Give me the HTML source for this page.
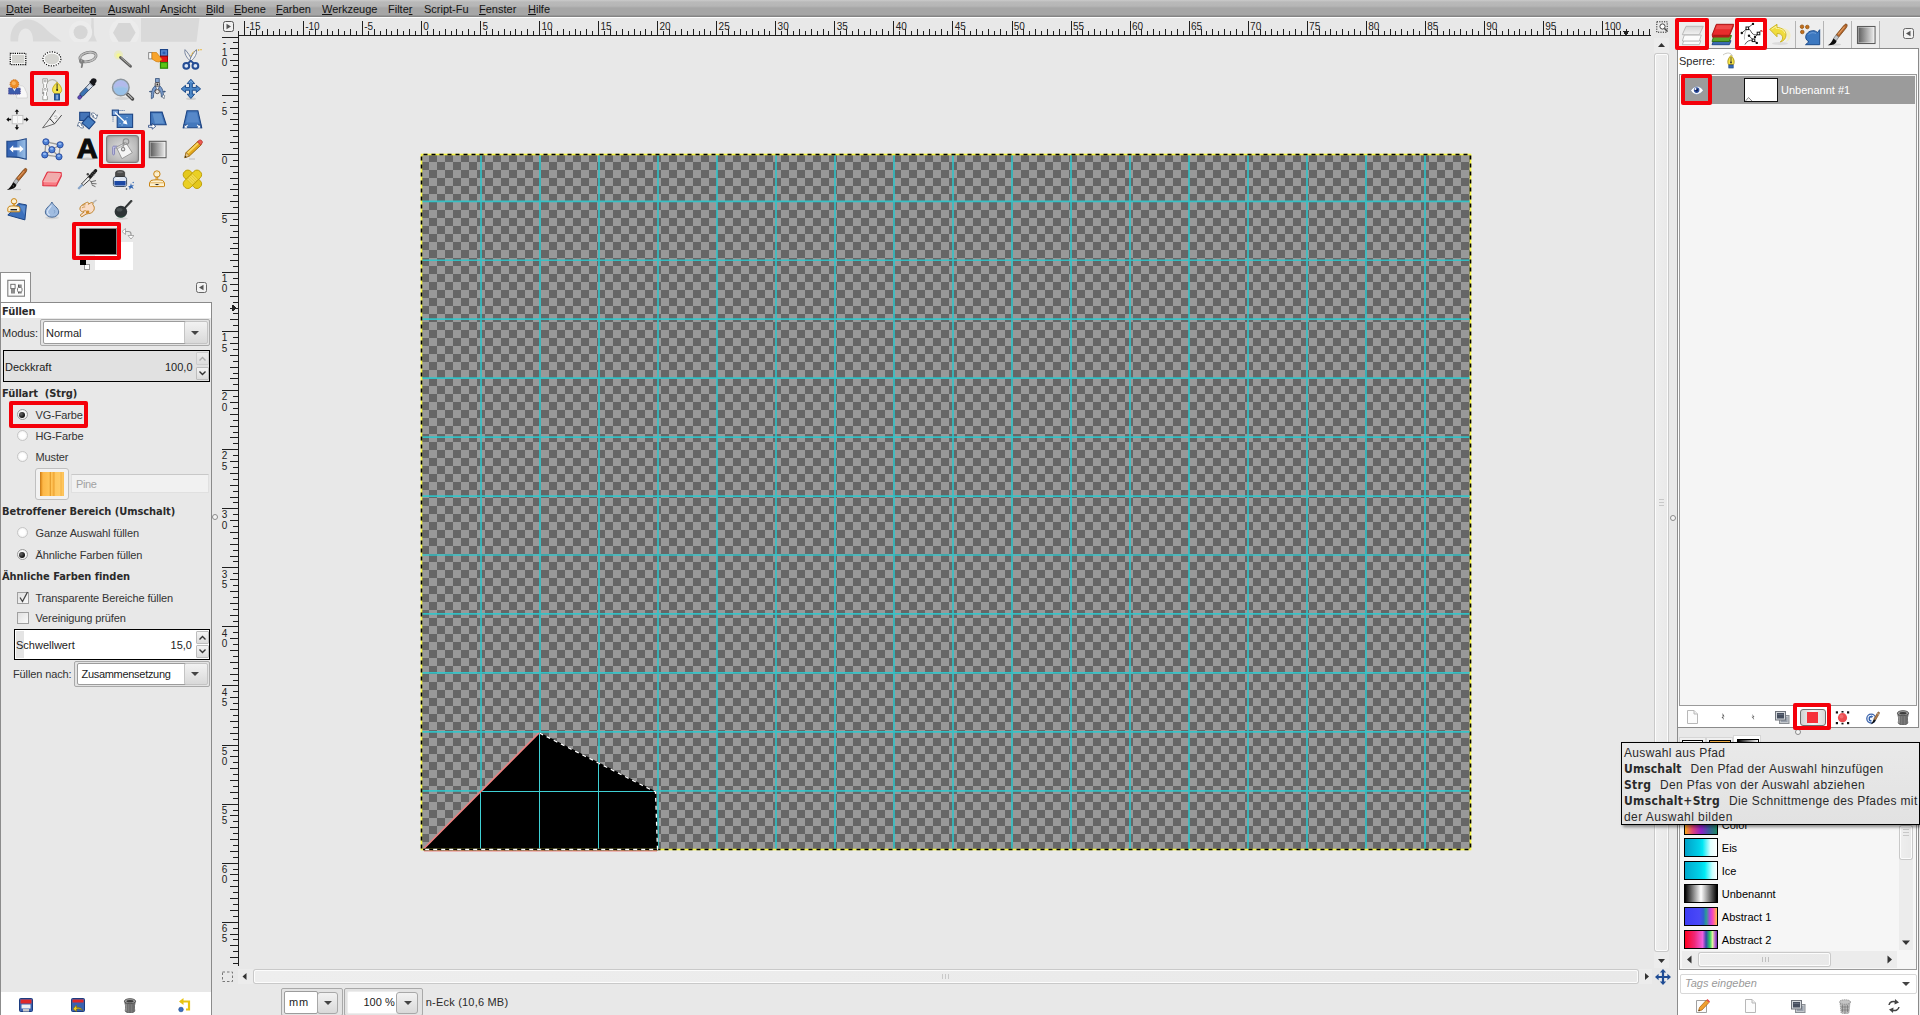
<!DOCTYPE html>
<html lang="de"><head><meta charset="utf-8"><title>GIMP</title>
<style>
html,body{margin:0;padding:0}
body{width:1920px;height:1015px;position:relative;overflow:hidden;background:#e8e8e8;font-family:"Liberation Sans",sans-serif;font-size:11px;color:#1c1c1c;line-height:13px}
div,span,svg{position:absolute;box-sizing:border-box}
span{white-space:nowrap}
.b{font-weight:bold;color:#2a2a2a;font-family:"DejaVu Sans Condensed","Liberation Sans",sans-serif;letter-spacing:-.05px}
b.b{letter-spacing:inherit}
.l{color:#333;letter-spacing:-.12px}
.red{border:4px solid #f4000a;border-radius:2px}
#menu{left:0;top:0;width:1920px;height:17px;background:linear-gradient(#cbcbcb 0,#b9b9b9 2px,#b6b6b6 6px,#a6a6a6 8px,#a6a6a6 15px,#858585 16px,#858585 17px)}
#menu span{top:3px;font-size:11px;color:#141414}
#mline{left:0;top:17px;width:1920px;height:1px;background:#fff}
.rl{font-size:10px;color:#222;line-height:10px}
.vr{font-size:10px;color:#222;line-height:10.2px;width:8px;text-align:center;left:220.5px;white-space:normal;word-break:break-all}
#canvas{left:421px;top:154px;width:1050px;height:696px;background-color:#666;background-image:conic-gradient(#999 25%,#666 0 50%,#999 0 75%,#666 0);background-size:16px 16px;background-position:8px 0;overflow:hidden}
.combo{border:1px solid #a9a9a9;background:#e3e3e3;border-radius:2px}
.combo i{position:absolute;left:2px;top:1px;bottom:1px;background:#fff;border:1px solid #9c9c9c;border-radius:2px}
.combo b{position:absolute;right:1px;top:1px;bottom:1px;width:22px;border:1px solid #c4c4c4;border-radius:2px;background:linear-gradient(#f2f2f2,#d9d9d9)}
.arr{width:0;height:0;border-left:4px solid transparent;border-right:4px solid transparent;border-top:4px solid #444}
.radio{width:11px;height:11px;border-radius:6px;border:1px solid #c6c6c6;background:radial-gradient(#fff 40%,#e6e6e6)}
.radio.on{border-color:#9a9a9a}
.radio.on:after{content:"";position:absolute;left:1.5px;top:1.5px;width:6px;height:6px;border-radius:3px;background:radial-gradient(circle at 35% 35%,#666,#111 70%)}
.chk{width:12px;height:12px;border:1px solid #a0a0a0;background:linear-gradient(135deg,#e0e0e0,#fafafa)}
.slider{border:1.5px solid #000;background:#fff}
.spin{width:13px;border:1px solid #bdbdbd;background:linear-gradient(#f4f4f4,#dcdcdc);border-radius:1px}
.sbt{background:linear-gradient(90deg,#eeeeee,#e9e9e9);border:1px solid #fcfcfc;box-shadow:0 0 0 1px #c9c9c9;border-radius:2px}
.ring{width:6px;height:6px;border-radius:3px;border:1.3px solid #8a8a8a;background:#f4f4f4}
</style></head>
<body>
<div id="menu"><span style="left:6px"><u>D</u>atei</span><span style="left:43px">Bearbeite<u>n</u></span><span style="left:108px"><u>A</u>uswahl</span><span style="left:160px">An<u>s</u>icht</span><span style="left:206px"><u>B</u>ild</span><span style="left:234px"><u>E</u>bene</span><span style="left:276px"><u>F</u>arben</span><span style="left:322px"><u>W</u>erkzeuge</span><span style="left:388px">Filte<u>r</u></span><span style="left:424px">Script-Fu</span><span style="left:479px"><u>F</u>enster</span><span style="left:528px"><u>H</u>ilfe</span></div><div id="mline"></div>
<div style="left:211px;top:992px;width:1px;height:23px;background:#8c8c8c"></div><div style="left:0;top:303px;width:1px;height:712px;background:#8c8c8c"></div><svg style="left:0;top:0" width="1700" height="1015" shape-rendering="crispEdges"><path d="M238.5 31V35M244.5 21V35M250.5 31V35M256.5 29V35M262.5 31V35M267.5 29V35M273.5 31V35M279.5 29V35M285.5 31V35M291.5 29V35M297.5 31V35M303.5 21V35M309.5 31V35M315.5 29V35M321.5 31V35M327.5 29V35M332.5 31V35M338.5 29V35M344.5 31V35M350.5 29V35M356.5 31V35M362.5 21V35M368.5 31V35M374.5 29V35M380.5 31V35M386.5 29V35M391.5 31V35M397.5 29V35M403.5 31V35M409.5 29V35M415.5 31V35M421.5 21V35M427.5 31V35M433.5 29V35M439.5 31V35M445.5 29V35M451.5 31V35M456.5 29V35M462.5 31V35M468.5 29V35M474.5 31V35M480.5 21V35M486.5 31V35M492.5 29V35M498.5 31V35M504.5 29V35M510.5 31V35M515.5 29V35M521.5 31V35M527.5 29V35M533.5 31V35M539.5 21V35M545.5 31V35M551.5 29V35M557.5 31V35M563.5 29V35M569.5 31V35M575.5 29V35M580.5 31V35M586.5 29V35M592.5 31V35M598.5 21V35M604.5 31V35M610.5 29V35M616.5 31V35M622.5 29V35M628.5 31V35M634.5 29V35M640.5 31V35M645.5 29V35M651.5 31V35M657.5 21V35M663.5 31V35M669.5 29V35M675.5 31V35M681.5 29V35M687.5 31V35M693.5 29V35M699.5 31V35M704.5 29V35M710.5 31V35M716.5 21V35M722.5 31V35M728.5 29V35M734.5 31V35M740.5 29V35M746.5 31V35M752.5 29V35M758.5 31V35M764.5 29V35M769.5 31V35M775.5 21V35M781.5 31V35M787.5 29V35M793.5 31V35M799.5 29V35M805.5 31V35M811.5 29V35M817.5 31V35M823.5 29V35M828.5 31V35M834.5 21V35M840.5 31V35M846.5 29V35M852.5 31V35M858.5 29V35M864.5 31V35M870.5 29V35M876.5 31V35M882.5 29V35M888.5 31V35M893.5 21V35M899.5 31V35M905.5 29V35M911.5 31V35M917.5 29V35M923.5 31V35M929.5 29V35M935.5 31V35M941.5 29V35M947.5 31V35M952.5 21V35M958.5 31V35M964.5 29V35M970.5 31V35M976.5 29V35M982.5 31V35M988.5 29V35M994.5 31V35M1000.5 29V35M1006.5 31V35M1012.5 21V35M1017.5 31V35M1023.5 29V35M1029.5 31V35M1035.5 29V35M1041.5 31V35M1047.5 29V35M1053.5 31V35M1059.5 29V35M1065.5 31V35M1071.5 21V35M1077.5 31V35M1082.5 29V35M1088.5 31V35M1094.5 29V35M1100.5 31V35M1106.5 29V35M1112.5 31V35M1118.5 29V35M1124.5 31V35M1130.5 21V35M1136.5 31V35M1141.5 29V35M1147.5 31V35M1153.5 29V35M1159.5 31V35M1165.5 29V35M1171.5 31V35M1177.5 29V35M1183.5 31V35M1189.5 21V35M1195.5 31V35M1201.5 29V35M1206.5 31V35M1212.5 29V35M1218.5 31V35M1224.5 29V35M1230.5 31V35M1236.5 29V35M1242.5 31V35M1248.5 21V35M1254.5 31V35M1260.5 29V35M1265.5 31V35M1271.5 29V35M1277.5 31V35M1283.5 29V35M1289.5 31V35M1295.5 29V35M1301.5 31V35M1307.5 21V35M1313.5 31V35M1319.5 29V35M1325.5 31V35M1330.5 29V35M1336.5 31V35M1342.5 29V35M1348.5 31V35M1354.5 29V35M1360.5 31V35M1366.5 21V35M1372.5 31V35M1378.5 29V35M1384.5 31V35M1390.5 29V35M1395.5 31V35M1401.5 29V35M1407.5 31V35M1413.5 29V35M1419.5 31V35M1425.5 21V35M1431.5 31V35M1437.5 29V35M1443.5 31V35M1449.5 29V35M1454.5 31V35M1460.5 29V35M1466.5 31V35M1472.5 29V35M1478.5 31V35M1484.5 21V35M1490.5 31V35M1496.5 29V35M1502.5 31V35M1508.5 29V35M1514.5 31V35M1519.5 29V35M1525.5 31V35M1531.5 29V35M1537.5 31V35M1543.5 21V35M1549.5 31V35M1555.5 29V35M1561.5 31V35M1567.5 29V35M1573.5 31V35M1578.5 29V35M1584.5 31V35M1590.5 29V35M1596.5 31V35M1602.5 21V35M1608.5 31V35M1614.5 29V35M1620.5 31V35M1626.5 29V35M1632.5 31V35M1638.5 29V35M1643.5 31V35M1649.5 29V35" stroke="#1e1e1e" stroke-width="1" fill="none"/><path d="M238 35.5H1651" stroke="#1e1e1e" stroke-width="1"/><path d="M222 37.5H238M233 42.5H238M230 48.5H238M233 54.5H238M230 60.5H238M233 65.5H238M230 71.5H238M233 77.5H238M230 83.5H238M233 89.5H238M222 95.5H238M233 101.5H238M230 107.5H238M233 113.5H238M230 119.5H238M233 124.5H238M230 130.5H238M233 136.5H238M230 142.5H238M233 148.5H238M222 154.5H238M233 160.5H238M230 166.5H238M233 172.5H238M230 178.5H238M233 184.5H238M230 189.5H238M233 195.5H238M230 201.5H238M233 207.5H238M222 213.5H238M233 219.5H238M230 225.5H238M233 231.5H238M230 237.5H238M233 243.5H238M230 248.5H238M233 254.5H238M230 260.5H238M233 266.5H238M222 272.5H238M233 278.5H238M230 284.5H238M233 290.5H238M230 296.5H238M233 302.5H238M230 308.5H238M233 313.5H238M230 319.5H238M233 325.5H238M222 331.5H238M233 337.5H238M230 343.5H238M233 349.5H238M230 355.5H238M233 361.5H238M230 367.5H238M233 373.5H238M230 378.5H238M233 384.5H238M222 390.5H238M233 396.5H238M230 402.5H238M233 408.5H238M230 414.5H238M233 420.5H238M230 426.5H238M233 432.5H238M230 437.5H238M233 443.5H238M222 449.5H238M233 455.5H238M230 461.5H238M233 467.5H238M230 473.5H238M233 479.5H238M230 485.5H238M233 491.5H238M230 497.5H238M233 502.5H238M222 508.5H238M233 514.5H238M230 520.5H238M233 526.5H238M230 532.5H238M233 538.5H238M230 544.5H238M233 550.5H238M230 556.5H238M233 561.5H238M222 567.5H238M233 573.5H238M230 579.5H238M233 585.5H238M230 591.5H238M233 597.5H238M230 603.5H238M233 609.5H238M230 615.5H238M233 621.5H238M222 626.5H238M233 632.5H238M230 638.5H238M233 644.5H238M230 650.5H238M233 656.5H238M230 662.5H238M233 668.5H238M230 674.5H238M233 680.5H238M222 685.5H238M233 691.5H238M230 697.5H238M233 703.5H238M230 709.5H238M233 715.5H238M230 721.5H238M233 727.5H238M230 733.5H238M233 739.5H238M222 745.5H238M233 750.5H238M230 756.5H238M233 762.5H238M230 768.5H238M233 774.5H238M230 780.5H238M233 786.5H238M230 792.5H238M233 798.5H238M222 804.5H238M233 810.5H238M230 815.5H238M233 821.5H238M230 827.5H238M233 833.5H238M230 839.5H238M233 845.5H238M230 851.5H238M233 857.5H238M222 863.5H238M233 869.5H238M230 874.5H238M233 880.5H238M230 886.5H238M233 892.5H238M230 898.5H238M233 904.5H238M230 910.5H238M233 916.5H238M222 922.5H238M233 928.5H238M230 934.5H238M233 939.5H238M230 945.5H238M233 951.5H238M230 957.5H238M233 963.5H238" stroke="#1e1e1e" stroke-width="1" fill="none"/><path d="M238.5 36V966" stroke="#1e1e1e" stroke-width="1"/><path d="M1622 30.500h8l-4 5z" fill="#222"/><path d="M231.500 304v8l5.500-4z" fill="#222"/></svg>
<span class="rl" style="left:246.1px;top:22px">-15</span><span class="rl" style="left:305.2px;top:22px">-10</span><span class="rl" style="left:364.2px;top:22px">-5</span><span class="rl" style="left:423.3px;top:22px">0</span><span class="rl" style="left:482.4px;top:22px">5</span><span class="rl" style="left:541.4px;top:22px">10</span><span class="rl" style="left:600.5px;top:22px">15</span><span class="rl" style="left:659.5px;top:22px">20</span><span class="rl" style="left:718.6px;top:22px">25</span><span class="rl" style="left:777.6px;top:22px">30</span><span class="rl" style="left:836.7px;top:22px">35</span><span class="rl" style="left:895.7px;top:22px">40</span><span class="rl" style="left:954.8px;top:22px">45</span><span class="rl" style="left:1013.8px;top:22px">50</span><span class="rl" style="left:1072.9px;top:22px">55</span><span class="rl" style="left:1132.0px;top:22px">60</span><span class="rl" style="left:1191.0px;top:22px">65</span><span class="rl" style="left:1250.1px;top:22px">70</span><span class="rl" style="left:1309.1px;top:22px">75</span><span class="rl" style="left:1368.2px;top:22px">80</span><span class="rl" style="left:1427.2px;top:22px">85</span><span class="rl" style="left:1486.3px;top:22px">90</span><span class="rl" style="left:1545.3px;top:22px">95</span><span class="rl" style="left:1604.4px;top:22px">100</span>
<span class="vr" style="top:38.0px">-10</span><span class="vr" style="top:97.0px">-5</span><span class="vr" style="top:156.1px">0</span><span class="vr" style="top:215.2px">5</span><span class="vr" style="top:274.2px">10</span><span class="vr" style="top:333.3px">15</span><span class="vr" style="top:392.3px">20</span><span class="vr" style="top:451.4px">25</span><span class="vr" style="top:510.4px">30</span><span class="vr" style="top:569.5px">35</span><span class="vr" style="top:628.5px">40</span><span class="vr" style="top:687.6px">45</span><span class="vr" style="top:746.6px">50</span><span class="vr" style="top:805.7px">55</span><span class="vr" style="top:864.8px">60</span><span class="vr" style="top:923.8px">65</span>
<svg style="left:223px;top:21px" width="11" height="11" viewBox="0 0 11 11"><rect x=".5" y=".5" width="10" height="10" rx="2" fill="#f0f0f0" stroke="#555"/><path d="M3.5 2.8v5.4l4.5-2.7z" fill="#555"/></svg><svg style="left:1656px;top:21px" width="12" height="12" viewBox="0 0 12 12"><rect x=".8" y=".8" width="10.400" height="10.400" fill="none" stroke="#222" stroke-dasharray="1.200 1.200"/><circle cx="6.500" cy="5.500" r="2.600" fill="#fff" stroke="#444" stroke-width="1"/><path d="M8.500 7.500l2.500 2.500" stroke="#444" stroke-width="1.600"/></svg><svg style="left:221px;top:970px" width="13" height="13" viewBox="0 0 13 13"><rect x="1.500" y="2" width="10" height="9.500"fill="none" stroke="#777" stroke-dasharray="2.500 2"/></svg><svg style="left:1655px;top:969px" width="16" height="16" viewBox="0 0 16 16"><path d="M8 0l3.200 3.600h-2.100v3.300h3.300v-2.100l3.600 3.200-3.600 3.200v-2.100h-3.300v3.300h2.100l-3.200 3.600-3.200-3.600h2.100v-3.300h-3.300v2.100l-3.600-3.200 3.600-3.200v2.100h3.300v-3.300h-2.100z" fill="#1f4c94"/></svg>
<div id="canvas"></div><svg style="left:0;top:0" width="1500" height="860"><path d="M481.0 154V850M540.0 154V850M599.0 154V850M658.0 154V850M717.0 154V850M776.0 154V850M835.0 154V850M894.0 154V850M953.0 154V850M1012.0 154V850M1071.0 154V850M1130.0 154V850M1189.0 154V850M1248.0 154V850M1307.0 154V850M1366.0 154V850M1425.0 154V850M421 201.30H1471M421 260.25H1471M421 319.20H1471M421 378.15H1471M421 437.10H1471M421 496.05H1471M421 555.00H1471M421 613.95H1471M421 672.90H1471M421 731.85H1471M421 790.80H1471" stroke="#2fc6ca" stroke-width="1.7" fill="none" opacity=".92"/></svg>
<svg style="left:400px;top:140px" width="1100" height="730" viewBox="400 140 1100 730"><path d="M423 849.5L539.5 733L655.5 792L657.5 849.5Z" fill="#000"/><path d="M480.5 792V849M539.5 734V849M598.5 764V849M482 791.5H655" stroke="#3fd0d4" stroke-width="1" fill="none"/><path d="M422.5 850L539 733M424 850.8H657" stroke="#f08080" stroke-width="1.6" fill="none"/><rect x="421.5" y="154.5" width="1049" height="695" fill="none" stroke="#f6f640" stroke-width="1.6"/><rect x="421.5" y="154.5" width="1049" height="695" fill="none" stroke="#000" stroke-width="1.6" stroke-dasharray="4 4" stroke-dashoffset="-2"/><path d="M539.5 733L655.5 792L657.5 849.5L423 849.5" stroke="#000" stroke-width="1.3" fill="none"/><path d="M539.5 733L655.5 792L657.5 849.5L423 849.5" stroke="#fff" stroke-width="1.3" stroke-dasharray="4 4" fill="none"/></svg>
<div style="left:238px;top:969px;width:1414px;height:15px;background:#ececec"></div><div class="sbt" style="left:254px;top:970px;width:1384px;height:13px"></div><svg style="left:238px;top:969px" width="1414" height="15"><path d="M4.500 7.5l4-3.500v7z" fill="#333"/><path d="M1411 7.5l-4-3.5v7z" fill="#333"/><path d="M704.5 5v5M707.5 5v5M710.5 5v5" stroke="#c8c8c8"/></svg><div style="left:1654px;top:38px;width:15px;height:930px;background:#ececec"></div><div class="sbt" style="left:1655px;top:54px;width:13px;height:897px"></div><svg style="left:1654px;top:38px" width="15" height="930"><path d="M7.5 5l3.5 4h-7z" fill="#333"/><path d="M7.5 925l3.5-4h-7z" fill="#333"/><path d="M5 461.5h5M5 464.5h5M5 467.5h5" stroke="#c8c8c8"/></svg>
<div class="combo" style="left:281px;top:988px;width:62px;height:28px"><i style="width:32px;left:2px;top:2px"></i><b style="width:19px;right:4px;top:3px;border-color:#a8a8a8;border-radius:3px"></b></div><span style="left:289px;top:996px;letter-spacing:.8px">mm</span><div class="arr" style="left:324px;top:1001px"></div><div class="combo" style="left:344px;top:988px;width:79px;height:28px"><i style="width:51px;left:2px;top:2px;border-color:#ededed"></i><b style="width:20px;right:4px;top:3px;border-color:#a8a8a8;border-radius:3px"></b></div><span style="left:363.5px;top:996px">100 %</span><div class="arr" style="left:404px;top:1001px"></div><span style="left:425.8px;top:996px;color:#2a2a2a;letter-spacing:.2px">n-Eck (10,6 MB)</span>
<div class="ring" style="left:1670.4px;top:514.6px"></div><div class="ring" style="left:211.6px;top:514px"></div><div class="ring" style="left:1795.3px;top:728.7px"></div>
<svg style="left:8px;top:18px" width="200" height="24" viewBox="0 0 200 24"><g fill="#d9d9d9"><path d="M2.600 23.500c-1-13 6-22 17-22 9 0 15 6 22 13l12 9h-28.500c0-8-3-13-7.500-13s-7.500 5-7.500 13z"/><path d="M83.400 0h2.200l.5 17 2.800 6.500h-8.800l2.800-6.500z"/><path d="M133 0h58.500l-3 23.800h-55.500z"/></g><circle cx="72.600" cy="14.200" r="11.500" fill="#ececec"/><circle cx="72.600" cy="14.200" r="7" fill="#d6d6d6"/><circle cx="116.300" cy="14.800" r="15" fill="#ececec"/><path d="M105 14.800l5.500-9.800h11.600l5.500 9.800-5.500 9h-11.600z" fill="#d6d6d6"/></svg>
<div style="left:106px;top:135px;width:33px;height:28px;border:1px solid #7e7e7e;border-radius:3px;background:radial-gradient(ellipse at center,#cfcfcf 30%,#a8a8a8 100%);box-shadow:inset 0 0 2px #777"></div><svg style="left:5.5px;top:46.5px" width="24" height="24" viewBox="0 0 24 24"><rect x="3.800" y="5.800" width="16.400" height="12.300" fill="#fff"/><rect x="6" y="7.800" width="12.400" height="8.500" fill="#d2d2ce"/><rect x="4.300" y="6.300" width="15.500" height="11.300" fill="none" stroke="#000" stroke-width="1.300" stroke-dasharray="1.200 1.030"/></svg><svg style="left:39.5px;top:46.5px" width="24" height="24" viewBox="0 0 24 24"><ellipse cx="11.900" cy="11.900" rx="9.600" ry="7.600" fill="#fff"/><ellipse cx="11.900" cy="11.900" rx="7.300" ry="5.500" fill="#d4d4d0"/><ellipse cx="11.900" cy="11.900" rx="9" ry="7" fill="none" stroke="#111" stroke-width="1.200" stroke-dasharray="1.200 1.300"/></svg><svg style="left:74.5px;top:46.5px" width="24" height="24" viewBox="0 0 24 24"><g transform="rotate(-14 13 10)" fill="none"><ellipse cx="13" cy="10" rx="8.300" ry="4.600" stroke="#808080" stroke-width="2.800"/><ellipse cx="13" cy="10" rx="8.300" ry="4.600" stroke="#e2e2e2" stroke-width="1.100"/><ellipse cx="13" cy="10" rx="8.300" ry="4.600" stroke="#8a8a8a" stroke-width=".4"/></g><path d="M5.500 12.500c-1.300 1.500-.3 3.300 1.500 3.300s2-1.800.5-2.300M7 15.500c.3 1.500.3 3 -.3 4.500" fill="none" stroke="#808080" stroke-width="1.900" stroke-linecap="round"/></svg><svg style="left:110.5px;top:46.5px" width="24" height="24" viewBox="0 0 24 24"><circle cx="7.500" cy="8" r="4.500" fill="#eef07a" opacity=".35"/><circle cx="7.500" cy="8.500" r="2.200" fill="#f6f88a" opacity=".9"/><path d="M9.500 10.500L19.500 19.300" stroke="#5a5a5a" stroke-width="2.800" stroke-linecap="round"/><path d="M10 10.500L19 18.400" stroke="#b4b4ac" stroke-width=".9" stroke-linecap="round"/></svg><svg style="left:145.5px;top:46.5px" width="24" height="24" viewBox="0 0 24 24"><rect x="14.500" y="2.600" width="7" height="6.600" fill="#5c8cd4" stroke="#1c4488" stroke-width="1.200"/><rect x="16.500" y="4.500" width="3" height="2.800" fill="#2c5cb0"/><rect x="14.500" y="9.200" width="7" height="6.300" fill="#e41414" stroke="#a00000" stroke-width="1"/><rect x="14.500" y="15.500" width="7" height="5.700" fill="#5cc414" stroke="#2c8404" stroke-width="1.200"/><rect x="2.700" y="5.600" width="3.300" height="6.300" fill="#fff" stroke="#7c7c7c" stroke-width=".9"/><path d="M6 5.500h4.500l5.500 7-3 2.500-3-.5-4-2.600z" fill="#f8a42c" stroke="#d07c0c" stroke-width=".7"/></svg><svg style="left:179.5px;top:46.5px" width="24" height="24" viewBox="0 0 24 24"><path d="M10.900 9c1.500-4 5-6.500 11.500-6.200" stroke="#e8ac18" stroke-width="1.100" stroke-dasharray="1.500 .9" fill="none"/><path d="M5 2.600c-.9 4 1.500 8 5.200 11.400l1.200-1.300c-.9-3-3.600-7.300-6.400-10.100z" fill="#ececec" stroke="#5c6c8c" stroke-width=".8"/><path d="M16.400 2.600c.9 4-1.500 8-5.200 11.400l-1.200-1.300c.9-3 3.600-7.300 6.400-10.100z" fill="#f4f4f4" stroke="#5c6c8c" stroke-width=".8"/><ellipse cx="6.300" cy="18.900" rx="2.900" ry="2.800" fill="#dce6f6" stroke="#244c94" stroke-width="2"/><ellipse cx="15.400" cy="18.900" rx="2.900" ry="2.800" fill="#dce6f6" stroke="#244c94" stroke-width="2"/><path d="M8 16.300l2.800-2.400 2.800 2.400" stroke="#244c94" stroke-width="1.900" fill="none"/></svg>
<svg style="left:5.5px;top:76.5px" width="24" height="24" viewBox="0 0 24 24"><path d="M11 12c.5-2.500 3-3.800 5.500-3 1.500.5 2.500 2 3 4.500 1.500 1.500 2 4 1.800 7.500h-10.800z" fill="#f8f8f8" stroke="#cfcfcf" stroke-width=".8"/><rect x="2.700" y="11.100" width="11.500" height="6" fill="#3c5cac" stroke="#443c8c" stroke-width=".9" stroke-dasharray="1.100 .7"/><path d="M6.500 11.100l1.900 3.200 1.900-3.200z" fill="#e4ecfc"/><circle cx="8.400" cy="7" r="4.300" fill="#ee8c24" stroke="#c4640c" stroke-width="1" stroke-dasharray="1.200 .8"/><circle cx="7.800" cy="6.300" r="2" fill="#fcc070" opacity=".75"/></svg><svg style="left:39.5px;top:76.5px" width="24" height="24" viewBox="0 0 24 24"><path d="M7 5.500c3-3.800 8-3.800 10.500.3" fill="none" stroke="#b8b8b0" stroke-width="1.200"/><path d="M2.800 1.800h4.600v4.400l-.9 1v3.200l.9 1v3l-.9 1v3l.9 1v3.400h-4.600v-3.400l.9-1v-3l-.9-1v-3l.9-1v-3.200l-.9-1z" fill="#fff" stroke="#8c8c88" stroke-width=".8"/><circle cx="5.100" cy="4" r="1" fill="#fff" stroke="#777" stroke-width=".6"/><circle cx="5.100" cy="12.300" r="1" fill="#fff" stroke="#777" stroke-width=".6"/><path d="M2 17l2-2M2 15l2 2" stroke="#888" stroke-width=".7"/><path d="M17.100 5.300c-3.800 3.500-5.400 6.800-4.200 9.200l1.800 2.300h4.800l1.800-2.300c1.200-2.400-.4-5.700-4.200-9.200z" fill="#f4e44c" stroke="#c0a414" stroke-width=".9"/><path d="M17.100 6.500v6.500" stroke="#222" stroke-width=".9"/><circle cx="17.100" cy="13" r="1" fill="#222"/><rect x="14.500" y="17" width="5" height="6" fill="#3468b4" stroke="#1c4484" stroke-width=".9"/><rect x="16.400" y="17.800" width="1.300" height="4.600" fill="#a4c4ec"/></svg><svg style="left:74.5px;top:76.5px" width="24" height="24" viewBox="0 0 24 24"><path d="M15.800 3.300c.5-2 3-2.800 4.700-1.500 1.700 1.300 1.400 3.400-.3 4.400l.4 1.100-2 2-4.500-4.400 2-2z" fill="#16161a"/><path d="M14.800 6.200l3 3-9.600 9.800-2.600.3-.4-2.900z" fill="#d4deea" stroke="#444c5c" stroke-width=".9"/><path d="M11 10.600l2.600 2.600-5.400 5.800-2.600.3-.4-2.900z" fill="#3c74b4" stroke="#2c3c5c" stroke-width=".5"/><path d="M4.800 17.800c-1.800 1.200-2.600 3-1.600 4 1.200 1 3.200.2 3.800-2z" fill="#5c4cbc" stroke="#30246c" stroke-width=".7"/></svg><svg style="left:110.5px;top:76.5px" width="24" height="24" viewBox="0 0 24 24"><ellipse cx="11" cy="21.500" rx="7" ry="1.500" fill="#c4c4c4" opacity=".6"/><path d="M16 16.800l5.500 5.200" stroke="#4c4c4c" stroke-width="3.300" stroke-linecap="round"/><path d="M17 17.500l1 1M18.700 19.200l1 1M20.400 20.900l.6.600" stroke="#c0c0c0" stroke-width="1.100" stroke-linecap="round"/><circle cx="9.800" cy="10.500" r="8.300" fill="#a8c2e6" stroke="#8c949c" stroke-width="1.400"/><path d="M3 10.500a6.800 6.800 0 0 1 13.600 0c-3.500-1.600-10-1.600-13.600 0z" fill="#b4b8ec" opacity=".85"/><path d="M3.200 11.500c3.500-1.500 9.800-1.500 13.200 0a6.600 6.600 0 0 1-13.200 0z" fill="#94c0e8" opacity=".8"/></svg><svg style="left:145.5px;top:76.5px" width="24" height="24" viewBox="0 0 24 24"><rect x="9.600" y="1.600" width="3.600" height="3.800" fill="#8ca8d0" stroke="#3c5880" stroke-width=".9"/><rect x="9.200" y="5.600" width="4.400" height="3.600" rx=".8" fill="#d8d8d8" stroke="#4c4444" stroke-width=".9"/><circle cx="11.400" cy="7.400" r=".9" fill="#222"/><path d="M9.200 8.800c-3 2-4.200 6.500-3.800 13l2-1.300c0-4 .8-7 3-9zM13.600 8.800c3 2 4.200 6.500 3.800 11l-2 .2c0-3.500-.8-6-3-8z" fill="#7c9ccc" stroke="#345078" stroke-width=".8"/><path d="M17.200 17.800l1.500.8-.7 3.200-1.800-2.500z" fill="#fff" stroke="#456" stroke-width=".6"/><circle cx="11.300" cy="14.600" r="2.100" fill="#e4e0dc" stroke="#4c4444" stroke-width=".9"/><path d="M3.500 14.600h2.500M16.800 14.600h2.500" stroke="#345078" stroke-width=".9"/><path d="M3 14.600l1.500-1.200v2.400zM19.800 14.600l-1.500-1.200v2.400z" fill="#345078"/></svg><svg style="left:179.5px;top:76.5px" width="24" height="24" viewBox="0 0 24 24"><ellipse cx="11" cy="21.800" rx="5" ry="1.200" fill="#bcbcbc" opacity=".6"/><path d="M10.900 2.300l3.700 4.300h-2.300v4h4v-2.300l4.300 3.600-4.300 3.600v-2.300h-4v4h2.300l-3.700 4.300-3.700-4.300h2.300v-4h-4v2.300l-4.300-3.600 4.300-3.600v2.300h4v-4h-2.300z" fill="#4c88c8" stroke="#1c4c8c" stroke-width="1"/><path d="M10.900 3.800l2 2.300M10.900 3.800l-2 2.300" stroke="#8cb8e8" stroke-width=".7" fill="none"/></svg>
<svg style="left:5.5px;top:106.5px" width="24" height="24" viewBox="0 0 24 24"><rect x="6.200" y="8.400" width="10.700" height="8.400" fill="#f8f8f8" stroke="#bcbcbc" stroke-width=".9"/><path d="M11.500 8.400v8.400" stroke="#e4e4e4"/><path d="M10.900 7.300v-4M10.900 17.800v4M5.200 12.500h-4M17.800 12.500h4" stroke="#0c0c0c" stroke-width="1.300"/><path d="M10.900 2.200l2.200 2.600h-4.400zM10.900 22.900l2.200-2.600h-4.400zM.3 12.500l2.600-2.200v4.400zM22.700 12.500l-2.600-2.200v4.400z" fill="#0c0c0c"/></svg><svg style="left:39.5px;top:106.5px" width="24" height="24" viewBox="0 0 24 24"><path d="M2.600 20.900l7.200-9.300 4.800 5.200z" fill="#ececec" stroke="#5c5c5c" stroke-width=".9"/><path d="M9.800 11.600l5.900-8.400M14.600 16.800l7.100-8.700M9.800 11.600l4.800 5.200" stroke="#4c4c4c" stroke-width="1" fill="none"/><path d="M11.500 11.400l4.500-6.300 4 3.400-5.300 6.500z" fill="#f4f4f4" opacity=".8"/><path d="M14 9.500c1.200-.8 2.600-.6 3.400.2M14.800 11.800l2.500-1" stroke="#a4a4a4" stroke-width=".8" fill="none"/></svg><svg style="left:74.5px;top:106.5px" width="24" height="24" viewBox="0 0 24 24"><rect x="4.700" y="5.300" width="10" height="8.200" fill="#4474b8" stroke="#1c4484" stroke-width="1.100"/><rect x="9" y="11" width="9.200" height="9.200" transform="rotate(41 13.600 15.600)" fill="#447cc0" stroke="#1c4484" stroke-width="1.100"/><path d="M16.500 6.200c2-.8 4 .2 4.500 2.200l1.700-.5-1.500 3.900-3.800-2.100 1.600-.5c-.3-.9-1.200-1.300-2.300-1z" fill="#fff" stroke="#3c5478" stroke-width=".7"/><path d="M8.500 20.800c-2 .8-4-.2-4.500-2.200l-1.700.5 1.500-3.900 3.800 2.100-1.600.5c.3.900 1.200 1.300 2.300 1z" fill="#fff" stroke="#3c5478" stroke-width=".7"/></svg><svg style="left:110.5px;top:106.5px" width="24" height="24" viewBox="0 0 24 24"><rect x="6.200" y="7.200" width="15.400" height="13.200" fill="#4880c4" stroke="#1c4484" stroke-width="1.100"/><rect x="1.300" y="3.100" width="6.100" height="5.300" fill="#7ca4dc" stroke="#1c4484" stroke-width="1.100"/><path d="M8.500 3.500h5M2 9.500v5" stroke="#1c4484" stroke-width=".9" stroke-dasharray="1 1.100"/><path d="M4 5.500l10.500 10" stroke="#fff" stroke-width="1.300"/><path d="M16.500 17.500l-5-1.200 3.600-3.600z" fill="#fff"/><path d="M9 16.500h.1M11 18h.1M16 10.500h.1" stroke="#c4dcf4" stroke-width="1" stroke-linecap="round"/></svg><svg style="left:145.5px;top:106.5px" width="24" height="24" viewBox="0 0 24 24"><path d="M4.600 5.100h11.500l4.100 12.700h-15.600z" fill="#4478bc" stroke="#1c4484" stroke-width="1.100"/><path d="M6.500 6.500h8.500l3 10h-9z" fill="#6c9cd4" opacity=".7"/><path d="M2.500 18.300h3.700v-1.900l3.600 2.900-3.600 2.900v-1.900h-3.700z" fill="#fff" stroke="#24447c" stroke-width=".8"/></svg><svg style="left:179.5px;top:106.5px" width="24" height="24" viewBox="0 0 24 24"><path d="M7 3.700h10.900l3.800 17h-18.500z" fill="#4478bc" stroke="#1c4484" stroke-width="1.100"/><path d="M8.500 5.500h8l2.500 10h-13z" fill="#5c8ccc" opacity=".8"/><path d="M3.500 21.800v-4.300h4.300zM21.300 21.800v-4.300h-4.300z" fill="#1c4484"/><path d="M4.500 20.800l.2-2.800 1 1 1.500-1.500.8.800-1.500 1.500.9.900zM20.300 20.800l-.2-2.800-1 1-1.500-1.500-.8.800 1.500 1.500-.9.900z" fill="#fff"/></svg>
<svg style="left:5.5px;top:136.5px" width="24" height="24" viewBox="0 0 24 24"><defs><linearGradient id="gf"><stop offset="0" stop-color="#3464b4"/><stop offset=".52" stop-color="#3c6cb8"/><stop offset=".56" stop-color="#6c98d0"/><stop offset="1" stop-color="#9cc0e8"/></linearGradient></defs><path d="M.9 4.200c7 .3 13-.3 19.300-2.400v20.500c-6.300-2.100-12.300-2.700-19.300-2.400z" fill="url(#gf)" stroke="#1c4484" stroke-width="1.100"/><path d="M3.300 11.900l3.900-3.600v2.300h6.500v-2.300l3.900 3.600-3.900 3.600v-2.300h-6.500v2.300z" fill="#fff"/></svg><svg style="left:39.5px;top:136.5px" width="24" height="24" viewBox="0 0 24 24"><path d="M5.900 4.800l14.200 3-1.100 12-14.200-1.900zM5.900 4.800l6 7.900 8.200-4.900M11.900 12.700l7.100 7.100M11.900 12.700l-7.100 5.200" fill="none" stroke="#9c9c98" stroke-width="1.300"/><g fill="#4c80d4" stroke="#1c3c94" stroke-width=".8"><circle cx="5.900" cy="4.800" r="3.100"/><circle cx="20.100" cy="7.800" r="3.100"/><circle cx="11.900" cy="12.700" r="3.100"/><circle cx="4.800" cy="17.900" r="3.100"/><circle cx="19" cy="19.800" r="3.100"/></g><g fill="#a4c4f8" opacity=".85"><ellipse cx="5.700" cy="3.800" rx="1.700" ry="1.100"/><ellipse cx="19.900" cy="6.800" rx="1.700" ry="1.100"/><ellipse cx="11.700" cy="11.700" rx="1.700" ry="1.100"/><ellipse cx="4.600" cy="16.900" rx="1.700" ry="1.100"/><ellipse cx="18.800" cy="18.800" rx="1.700" ry="1.100"/></g></svg><svg style="left:74.5px;top:136.5px" width="24" height="24" viewBox="0 0 24 24"><ellipse cx="12.500" cy="21.800" rx="8" ry="1.300" fill="#b8b8b8" opacity=".7"/><text x="12.300" y="21.200" text-anchor="middle" font-family="Liberation Sans, sans-serif" font-weight="bold" font-size="27.500" fill="#0c0c0c" stroke="#0c0c0c" stroke-width="1" textLength="21" lengthAdjust="spacingAndGlyphs">A</text></svg><svg style="left:110.5px;top:136.5px" width="24" height="24" viewBox="0 0 24 24"><path d="M2.500 9.200h4v1.700h-3.100v6.300c0 .9-1.700.9-1.700 0v-6.800c0-.8.300-1.200.8-1.200z" fill="#d0d0ec" stroke="#7070b0" stroke-width=".8"/><path d="M5.400 10.300l9.300-5 6.600 10.400-10.400 6z" fill="#f4f4f4" stroke="#909090" stroke-width=".9"/><path d="M5.400 10.300l9.300-5 1 1.500-9.400 5z" fill="#dcdcdc" stroke="#909090" stroke-width=".6"/><circle cx="15" cy="4.500" r="2.800" fill="none" stroke="#8c8c8c" stroke-width="1.100"/><path d="M12.200 5.500v6" stroke="#8c8c8c" stroke-width="1"/><circle cx="12.100" cy="12.200" r="1.700" fill="#e8e8e8" stroke="#848484" stroke-width="1.100"/></svg><svg style="left:145.5px;top:136.5px" width="24" height="24" viewBox="0 0 24 24"><defs><linearGradient id="gb"><stop offset="0" stop-color="#505050"/><stop offset="1" stop-color="#f4f4f4"/></linearGradient></defs><rect x="3.300" y="4.300" width="16.700" height="16.400" fill="url(#gb)" stroke="#5c5c5c" stroke-width="1.100"/><rect x="4.300" y="5.300" width="14.700" height="14.400" fill="none" stroke="#fff" stroke-width=".7" opacity=".55"/></svg><svg style="left:179.5px;top:136.5px" width="24" height="24" viewBox="0 0 24 24"><path d="M9 22h6" stroke="#b4b4b4" stroke-width="1" opacity=".8"/><path d="M4.800 20.700l1.300-5.200 12-11.300 3.300 3.500-12 11.300z" fill="#e4a81c" stroke="#94640c" stroke-width=".9"/><path d="M7 15.500l11.500-10.800 1.100 1.200-11.500 10.800z" fill="#f8d868"/><path d="M17.500 4.800l1.300-1.200c1-.9 2.300-.7 3 .2.800.9.800 2.100-.1 2.900l-1.300 1.200z" fill="#ec5c54" stroke="#b42c24" stroke-width=".8"/><path d="M4.800 20.700l1.300-5.200 3.300 3.500z" fill="#e8c894" stroke="#94640c" stroke-width=".6"/><path d="M4.800 20.700l.5-2 1.300 1.400z" fill="#1c1c1c"/></svg>
<svg style="left:5.5px;top:166.5px" width="24" height="24" viewBox="0 0 24 24"><path d="M7 22.500h8" stroke="#b4b4b4" stroke-width="1.200" opacity=".7"/><path d="M20.200 1.600c.9.500.6 1.900-.2 3.400l-7.400 8.900-2.600-2.200 7.400-8.700c1-1.200 2-1.900 2.800-1.400z" fill="#b4642c" stroke="#74400c" stroke-width=".8"/><path d="M18.200 4l-6.200 7.500" stroke="#e09c60" stroke-width="1.100"/><path d="M10 11.700l2.600 2.200-2.500 3.700-2.700-2.200z" fill="#b8bcc0" stroke="#6c6c6c" stroke-width=".7"/><path d="M7.200 15.200l3.200 2.600c-.5 3.300-4.300 4.900-9.600 5.300 2.700-1.600 4.300-4 6.400-7.900z" fill="#0c0c0c"/><path d="M6.800 18.500l1.200.8" stroke="#888" stroke-width=".8"/></svg><svg style="left:39.5px;top:166.5px" width="24" height="24" viewBox="0 0 24 24"><path d="M8.100 5.100l12.500.5c.6 0 .8.400.6 1v2.600l-4.900 9.800-13.200-.3c-.4 0-.4-.5-.2-.8v-3.800l4.100-8.400c.3-.5.600-.6 1.100-.6z" fill="#f87c84" stroke="#e03444" stroke-width="1.200" stroke-linejoin="round"/><path d="M8.100 5.600l12.300.5-4.300 8.300-12.600-.3z" fill="#f0acac"/><path d="M3.300 14.600l12.900.3 4.600-8.300" fill="none" stroke="#fcc8c8" stroke-width=".8"/></svg><svg style="left:74.5px;top:166.5px" width="24" height="24" viewBox="0 0 24 24"><path d="M19.800 2.300c1.200-1 3.200.8 2.200 2.200l-6.500 7.500-2.600-2.400z" fill="#1c1c1c"/><path d="M15 7l3.200 2.800M16.500 5.500l3 2.800M18 4l2.800 2.600" stroke="#666" stroke-width=".6"/><path d="M13.200 9.800l2.200 2.200-7.200 6.500-1.700-1.500z" fill="#f0f0f0" stroke="#2c2c2c" stroke-width=".9"/><circle cx="12.800" cy="7.200" r="1.200" fill="#444"/><path d="M6.500 17l1.700 1.500-4 4c-.8-.2-1.500-.8-1.600-1.500z" fill="#7c9cc4" opacity=".9"/><path d="M14.500 13.500c1.500.5 2.500 2 2.500 4M15.500 14.800l5.500-1.200M16.500 16.500l5 .3M16.800 18l3.700 1.700" stroke="#6c6c6c" stroke-width="1" fill="none"/></svg><svg style="left:110.5px;top:166.5px" width="24" height="24" viewBox="0 0 24 24"><path d="M2.400 12.500c0-2 1.300-3 3-3h7.200c1.700 0 3 1 3 3v5c0 1.300-1 2-2 2h-9.200c-1 0-2-.7-2-2z" fill="#dce4f0" stroke="#3c4c64" stroke-width="1"/><path d="M3.400 14h11.200v3.500c0 .8-.5 1-1.500 1h-8.200c-1 0-1.500-.2-1.500-1z" fill="#1c48a4"/><path d="M4.500 12.200c1-.8 2.500-1 4-.5" stroke="#fff" stroke-width="1" fill="none" opacity=".8"/><path d="M4.600 5.500c0-1.200 1.800-2 4.500-2s4.500.8 4.500 2v4h-9z" fill="#4c4c4c" stroke="#2c2c2c" stroke-width=".7"/><ellipse cx="9.100" cy="5.300" rx="3" ry="1" fill="#747474"/><path d="M17 19.500l2.200-.8.800-2.700.7 2.500 2.500-.8-1.800 1.800 1.300 2.500-2.500-1.300-1.700 2-.2-2.500z" fill="#3468b4"/><circle cx="15.500" cy="22" r=".8" fill="#234"/><circle cx="22.200" cy="15.500" r=".7" fill="#3468b4"/></svg><svg style="left:145.5px;top:166.5px" width="24" height="24" viewBox="0 0 24 24"><circle cx="10.900" cy="7" r="3.200" fill="#fcf0d0" stroke="#c88414" stroke-width="1"/><path d="M9.500 5.800c.5-.8 1.800-1 2.700-.3" stroke="#e8c880" stroke-width=".7" fill="none"/><rect x="10" y="10.200" width="1.800" height="3" fill="#f8d484" stroke="#c88414" stroke-width=".8"/><path d="M5 13.500c3-1 9-1 11.800 0l1.700 2.300v3.200c0 .4-.3.600-.8.600h-13.400c-.5 0-.8-.2-.8-.6v-3.200z" fill="#fcf0d0" stroke="#c88414" stroke-width="1"/><path d="M3.500 15.800h15" stroke="#dca84c" stroke-width=".9"/><path d="M8.500 17h5l-2.500 1.200z" fill="#1c1c1c"/></svg><svg style="left:179.5px;top:166.5px" width="24" height="24" viewBox="0 0 24 24"><g transform="rotate(45 12.400 12.300)"><rect x="1.400" y="7.800" width="22" height="9" rx="4.200" fill="#e4c81c" stroke="#bc9c04" stroke-width=".9"/></g><g transform="rotate(-45 12.400 12.300)"><rect x="1.400" y="7.800" width="22" height="9" rx="4.200" fill="#ead024" stroke="#bc9c04" stroke-width=".9"/><rect x="8.400" y="8.300" width="8" height="8" fill="#f2dc50" stroke="#c8a810" stroke-width=".5"/><path d="M10.400 8.500v7.600M12.400 8.500v7.600M14.400 8.500v7.600" stroke="#d4b418" stroke-width=".5"/></g></svg>
<svg style="left:5.5px;top:196.5px" width="24" height="24" viewBox="0 0 24 24"><path d="M12.700 6.500l7.700 1.400-1.500 15-17.100-4.800 4-4z" fill="#3c70bc" stroke="#1c4484" stroke-width="1"/><path d="M13.500 8l6 1-1 9z" fill="#6c9cd8" opacity=".6"/><circle cx="8" cy="4.300" r="2.700" fill="#fcf0d0" stroke="#c88414" stroke-width="1"/><rect x="7.200" y="7" width="1.600" height="2.300" fill="#f8d484" stroke="#c88414" stroke-width=".7"/><path d="M3 9.400c2.500-.7 7-.7 9.700 0l1.200 1.800v3c0 .4-.3.600-.8.600h-10.500c-.5 0-.8-.2-.8-.6v-3z" fill="#fcf0d0" stroke="#c88414" stroke-width="1"/><path d="M4.500 12.700h6.500" stroke="#1c1c1c" stroke-width="1.400"/></svg><svg style="left:39.5px;top:196.5px" width="24" height="24" viewBox="0 0 24 24"><ellipse cx="12" cy="20.800" rx="7" ry="1.500" fill="#c4c4c4" opacity=".6"/><path d="M11.900 5c1.500 3.600 6.800 6 6.800 10a6.700 5.200 0 0 1-13.400 0c0-4 5.100-6.400 6.600-10z" fill="#a0bce0" stroke="#4c6c98" stroke-width="1"/><path d="M11.500 8.500c-1.300 2.300-4.300 4-4 6.800.2 1.200 1 2.300 2.200 2.800" fill="none" stroke="#dce8f8" stroke-width="1.300" opacity=".9"/><path d="M14 13c1 1 1 2.500 0 3.500" fill="none" stroke="#7c9cc8" stroke-width=".8"/></svg><svg style="left:74.5px;top:196.5px" width="24" height="24" viewBox="0 0 24 24"><path d="M17.500 6l4-3" stroke="#b4b4b4" stroke-width="1.500"/><path d="M5 12.500c-.5-2 1-4 3-5l3.500-2c1.500-.8 2.800.5 1.800 1.800l2.500-1.500c1.500-.8 3 .5 2 2 1.500 1 2 3.500 1 5.500-.8 1.800-3 3.300-5.500 3.300l-2.300.5-4.300 2.800-1.500-1.800 4-3.300c-2.500.3-3.700-.8-4.200-2.300z" fill="#f8dcc8" stroke="#c0842c" stroke-width="1"/><path d="M7 11c.8-.8 2-1.200 3.200-1M7.500 8.500c.8-.6 2-.9 3-.7M8.500 14c1-.5 2-.5 3 0" stroke="#c0842c" fill="none" stroke-width=".8"/><path d="M11 14.500c1.500-1.500 3.500-1 3.300.5-.2 1.300-1.800 1.800-3.300 1.500z" fill="#d08c2c"/></svg><svg style="left:110.5px;top:196.5px" width="24" height="24" viewBox="0 0 24 24"><ellipse cx="11" cy="21.500" rx="6" ry="1.200" fill="#c4c4c4" opacity=".6"/><path d="M13.500 11.500l6.800-7.400" stroke="#2c3030" stroke-width="2.200" stroke-linecap="round"/><path d="M15 11l6.500-7" stroke="#888" stroke-width=".7"/><ellipse cx="9.900" cy="14.800" rx="6.300" ry="6" fill="#2e3436"/><ellipse cx="8.500" cy="12.800" rx="3" ry="1.800" fill="#5c6466" opacity=".6"/><path d="M6 19c2 1.500 5.500 1.500 7.500 0" stroke="#1c5c3c" stroke-width=".8" fill="none" opacity=".7"/></svg>
<div class="red" style="left:30px;top:71px;width:39px;height:35px"></div><div class="red" style="left:99px;top:130px;width:46px;height:38px"></div><div style="left:95px;top:242px;width:38px;height:28px;background:#fff"></div><div style="left:79px;top:228px;width:38px;height:27px;background:#000;border:1px solid #888"></div><div class="red" style="left:72px;top:222px;width:49px;height:38px"></div><div style="left:84px;top:264px;width:6px;height:6px;background:#fff;border:1px solid #999"></div><div style="left:80px;top:260px;width:6px;height:5px;background:#000"></div><svg style="left:121px;top:227px" width="13" height="13" viewBox="0 0 13 13"><path d="M2 4.500h5.500c1.500 0 2.500 1 2.500 2.500v2" fill="none" stroke="#999" stroke-width="1.200"/><path d="M4.500 1.500l-3.500 3 3.500 3z" fill="#fff" stroke="#999" stroke-width=".8"/><path d="M7 8.500l3 3.500 3-3.500z" fill="#fff" stroke="#999" stroke-width=".8"/></svg>
<div style="left:0px;top:272px;width:31px;height:31px;background:#fdfdfd;border:1px solid #8e8e8e;border-bottom:none"></div><svg style="left:7px;top:279px" width="18" height="18" viewBox="0 0 18 18"><rect x=".8" y="1.300" width="16.800" height="15.900" fill="#fbfbfb" stroke="#7c7c7c" stroke-width="1.100"/><rect x="3.800" y="5.300" width="4.300" height="4.300" fill="#fff" stroke="#666" stroke-width=".9"/><path d="M4.800 10v4.500M6 10v4.500M7.200 10v4.500" stroke="#444" stroke-width=".9"/><path d="M11.500 5.500v2.800M12.800 5.500v2.800M14 5.500v2.800M11.500 13v1.500M12.800 13v1.500M14 13v1.500" stroke="#444" stroke-width=".9"/><rect x="10.500" y="8.500" width="4.500" height="4.400" rx="1.200" fill="#fff" stroke="#666" stroke-width=".9"/></svg><svg style="left:196px;top:282px" width="11" height="11" viewBox="0 0 11 11"><rect x=".5" y=".5" width="10" height="10" rx="2" fill="#f2f2f2" stroke="#666"/><path d="M7.500 2.800v5.400l-4.500-2.700z" fill="#555"/></svg><div style="left:0px;top:302px;width:212px;height:690px;border:1px solid #8a8a8a;border-left:none;border-bottom:none"></div><div style="left:1px;top:303px;width:210px;height:15px;background:#fff"></div><span class="b" style="left:2px;top:305px">Füllen</span><span style="left:2px;top:327px;color:#2a2a2a">Modus:</span><div class="combo" style="left:40px;top:319px;width:170px;height:27px"><i style="width:142px"></i><b></b></div><span style="left:46px;top:327px">Normal</span><div class="arr" style="left:191px;top:331px"></div>
<div class="slider" style="left:3px;top:350px;width:207px;height:32px;background:#e1e1e1"></div><span style="left:5px;top:361px">Deckkraft</span><span style="left:165px;top:361px;width:27px;text-align:right">100,0</span><div class="spin" style="left:196px;top:352px;height:13px;opacity:.55"></div><div class="spin" style="left:196px;top:367px;height:13px"></div><svg style="left:196px;top:352px" width="13" height="28"><path d="M3.5 8.5l3-3 3 3" stroke="#aaa" fill="none" stroke-width="1.4"/><path d="M3.5 19.5l3 3 3-3" stroke="#333" fill="none" stroke-width="1.4"/></svg>
<span class="b" style="left:2px;top:387px">Füllart&nbsp; (Strg)</span><div class="radio on" style="left:16.5px;top:409px"></div><span style="left:35.5px;top:409px;" class="l">VG-Farbe</span><div class="red" style="left:9px;top:401px;width:79px;height:27px"></div><div class="radio" style="left:16.5px;top:430px"></div><span style="left:35.5px;top:430px;" class="l">HG-Farbe</span><div class="radio" style="left:16.5px;top:451px"></div><span style="left:35.5px;top:451px;" class="l">Muster</span>
<div style="left:35px;top:468px;width:34px;height:32px;border:1px solid #c0c0c0;border-radius:3px;background:#f2f2f2"></div><div style="left:40px;top:472px;width:24px;height:24px;background:linear-gradient(90deg,#c47818 0,#e89828 1.5px,#fdb848 3px,#ffc458 9px,#e8a030 10.5px,#ffc458 11.5px,#fcb848 13px,#eaa030 14px,#ffc860 15px,#ffcc68 20px,#f4b040 21px,#ffc860 22px,#fcc058)"></div><div style="left:71px;top:474px;width:138px;height:19px;background:#f1f1f1;border:1px solid #e0e0e0;border-top-color:#c8c8c8"></div><span style="left:76px;top:477.5px;color:#a2a2a2;letter-spacing:-.4px">Pine</span>
<span class="b" style="left:2px;top:504.5px">Betroffener Bereich (Umschalt)</span><div class="radio" style="left:16.5px;top:527px"></div><span style="left:35.5px;top:527px;" class="l">Ganze Auswahl füllen</span><div class="radio on" style="left:16.5px;top:549px"></div><span style="left:35.5px;top:549px;" class="l">Ähnliche Farben füllen</span><span class="b" style="left:2px;top:570px">Ähnliche Farben finden</span><div class="chk" style="left:17px;top:592px"></div><svg style="left:17px;top:590px" width="14" height="14"><path d="M3 7.5l2.5 4L10.5 2" stroke="#444" stroke-width="1.3" fill="none"/></svg><span style="left:35.5px;top:592px;" class="l">Transparente Bereiche füllen</span><div class="chk" style="left:17px;top:612px"></div><span style="left:35.5px;top:612px;" class="l">Vereinigung prüfen</span>
<div class="slider" style="left:14px;top:629px;width:196px;height:31px"></div><div style="left:16px;top:631px;width:8px;height:27px;background:#e4e4e4"></div><span style="left:16px;top:638.5px">Schwellwert</span><span style="left:165px;top:638.5px;width:27px;text-align:right">15,0</span><div class="spin" style="left:196px;top:631px;height:13px"></div><div class="spin" style="left:196px;top:645px;height:13px"></div><svg style="left:196px;top:631px" width="13" height="28"><path d="M3.5 8.5l3-3 3 3" stroke="#333" fill="none" stroke-width="1.4"/><path d="M3.5 18.5l3 3 3-3" stroke="#333" fill="none" stroke-width="1.4"/></svg><span style="left:13px;top:668px;" class="l">Füllen nach:</span><div class="combo" style="left:74px;top:661px;width:136px;height:26px"><i style="width:108px"></i><b></b></div><span style="left:81.5px;top:668px;letter-spacing:-.3px">Zusammensetzung</span><div class="arr" style="left:191px;top:672px"></div>
<div style="left:1px;top:992px;width:210px;height:23px;background:#fff"></div><svg style="left:18px;top:997px" width="16" height="16" viewBox="0 0 16 16"><rect x="1.500" y="1.500" width="13" height="13" rx="1" fill="#3a62b0" stroke="#1c3c80"/><rect x="2.500" y="2.500" width="11" height="4" fill="#e02828"/><rect x="3.500" y="7.500" width="9" height="4" fill="#f0f0f0"/><rect x="5" y="12" width="6" height="2.500" fill="#c8c8c8"/></svg><svg style="left:70px;top:997px" width="16" height="16" viewBox="0 0 16 16"><rect x="1.500" y="1.500" width="13" height="13" rx="1" fill="#3a62b0" stroke="#1c3c80"/><rect x="2.500" y="2.500" width="11" height="3" fill="#e02828"/><path d="M3 12l3.500-4v2.500c3-.5 5 .5 6 3-1.500-1.500-3.500-2-6-1.500v2.500z" fill="#f0d020" stroke="#806800" stroke-width=".6"/></svg><svg style="left:122px;top:997px" width="16" height="16" viewBox="0 0 16 16"><path d="M2.800 4.500c0 2 .8 3 .8 5.500s-.5 3-.3 4c.3 1.200 2.200 1.700 4.700 1.700s4.400-.5 4.700-1.700c.2-1-.3-1.500-.3-4s.8-3.500.8-5.500z" fill="#7c7c7c" stroke="#4c4c4c" stroke-width=".8"/><path d="M5 7v7.500M8 7.500v8M11 7v7.500" stroke="#5c5c5c" stroke-width=".8"/><path d="M4 7c.3 2 .3 5 0 7" stroke="#a8a8a8" stroke-width=".9" fill="none"/><ellipse cx="8" cy="4.200" rx="5.600" ry="2.500" fill="#a4a4a4" stroke="#4c4c4c" stroke-width=".9"/><ellipse cx="8" cy="4.300" rx="3.600" ry="1.300" fill="#3c3c3c"/></svg><svg style="left:176px;top:997px" width="16" height="16" viewBox="0 0 16 16"><path d="M4.500 4.500h8.500v8h-3" fill="none" stroke="#e8c410" stroke-width="2.200"/><path d="M7.500 1l-4.500 3.500 4.500 3.500z" fill="#e8c410"/><circle cx="5" cy="12.500" r="2.300" fill="#3a70c0" stroke="#1c4488" stroke-width=".6"/></svg>
<div style="left:1677px;top:48px;width:1px;height:967px;background:#8c8c8c"></div><div style="left:1679px;top:20px;width:201px;height:28px;background:#eeeeee"></div><div style="left:1737px;top:20px;width:29px;height:29px;background:#fff"></div><div style="left:1795px;top:21px;width:1px;height:27px;background:#b4b4b4"></div><div style="left:1823px;top:21px;width:1px;height:27px;background:#b4b4b4"></div><div style="left:1851px;top:21px;width:1px;height:27px;background:#b4b4b4"></div><div style="left:1879px;top:21px;width:1px;height:27px;background:#b4b4b4"></div><svg style="left:1681px;top:22px" width="24" height="24" viewBox="0 0 24 24"><defs><linearGradient id="gl" x1="0" y1="0" x2="0" y2="1"><stop offset="0" stop-color="#d4d4d4"/><stop offset="1" stop-color="#f2f2f2"/></linearGradient></defs><g stroke="#b4b4b4" stroke-width=".9"><path d="M1.300 22.700l1.500-4h17l-1.500 4z" fill="#fbfbfb"/><path d="M1.300 19l2-6h17l-2 6z" fill="#fcfcfc"/><path d="M1.300 12.700l3.700-8.400h17.300l-4 8.400z" fill="url(#gl)"/></g></svg><svg style="left:1711px;top:22px" width="24" height="24" viewBox="0 0 24 24"><path d="M1 22.700l1.500-4h17.500l-1.700 4z" fill="#3c6cb4" stroke="#1c4484" stroke-width=".9"/><path d="M1 19.500l2-6h17.500l-2.200 6z" fill="#58a42c" stroke="#2c6c0c" stroke-width=".9"/><path d="M1 13.300l4.300-11h17.400l-4.400 11z" fill="#e82c2c" stroke="#a40c0c" stroke-width=".9"/><path d="M6 3.300h15.500l-1.600 4h-15.500z" fill="#f46868" opacity=".55"/><path d="M1 13.300v2.200h17.300l4.400-11v-2.200l-4.400 11z" fill="#b41818"/></svg><svg style="left:1739px;top:22px" width="24" height="24" viewBox="0 0 24 24"><g fill="none" stroke="#2c2c2c" stroke-width=".8"><path d="M2.800 11L8.300 6.300 14 1.900"/><path d="M8.300 6.300c3.500.2 3.500 5.200 6.500 6.300 2 .6 3.500-.1 4.700-1.100"/><path d="M19.500 11.500l-3.500 3.500"/><path d="M10 13.800l4.500 4.500 3.300 2.600"/><path d="M6 22.500c1.500-3.200 4.500-4.700 8.500-4.200"/><path d="M8.300 6.300c-2.200 3.200-3.300 7.200-2.800 11.200" stroke="#888" stroke-width=".6"/><path d="M19.500 11.500l2.800-3.500" stroke="#555"/></g><path d="M21.800 8.500l1.700 1" stroke="#e01818" stroke-width="1.200"/><g fill="#fff" stroke="#111" stroke-width="1"><rect x="7" y="5" width="2.600" height="2.600"/><rect x="18.200" y="10.200" width="2.600" height="2.600"/><rect x="13.200" y="17" width="2.600" height="2.600"/></g><g fill="#111"><circle cx="14" cy="1.900" r="1.200"/><circle cx="2.800" cy="11" r="1.200"/><circle cx="10" cy="13.800" r="1.200"/><circle cx="16" cy="15" r="1.200"/><circle cx="17.800" cy="20.900" r="1.200"/></g></svg><svg style="left:1768px;top:22px" width="24" height="24" viewBox="0 0 24 24"><ellipse cx="12" cy="21.500" rx="8" ry="1.500" fill="#c8c8c8" opacity=".5"/><path d="M13 6c5-.5 9.500 2.500 9.500 7s-2.500 6.500-5 7c2-2 2.500-4 2-6" fill="#f6eeb0" opacity=".75"/><path d="M1.700 7.300l7.300-5v3.200c5.500.3 9 3.500 9 7.700 0 3.300-2.300 5.800-5.700 6.800 2-2 2.700-3.500 2.200-5.300-.6-2.300-2.600-3.200-5.500-3.200v3.300z" fill="#f0dc3c" stroke="#c8b020" stroke-width=".9"/><path d="M3.500 7.300l4.500-3v2c5 .2 8 1.700 9 5" fill="none" stroke="#fbf4a0" stroke-width="1"/></svg><svg style="left:1798px;top:22px" width="24" height="24" viewBox="0 0 24 24"><g fill="#c4701c" stroke="#8c4c08" stroke-width=".7"><circle cx="4" cy="4.700" r="1.800"/><circle cx="9.300" cy="5" r="1.800"/><circle cx="4.300" cy="10" r="1.800"/></g><path d="M9.500 11c3-3 7.500-3 10-.5l2.200-2.800v15h-14.200l3.500-3c-3.500-1.500-4.500-5.700-1.500-8.700z" fill="#3c78c0" stroke="#1c4c8c" stroke-width="1"/><path d="M10.500 12.500c2-2 5-2.300 7.500-1" fill="none" stroke="#6c9cd8" stroke-width="1"/></svg><svg style="left:1826px;top:22px" width="24" height="24" viewBox="0 0 24 24"><ellipse cx="9" cy="22.500" rx="6" ry="1" fill="#c0c0c0" opacity=".6"/><path d="M20.600 2.200c.9.500.6 1.900-.2 3.400l-7.700 9.500-2.600-2.200 7.700-9.300c1-1.200 2-1.900 2.800-1.400z" fill="#b4642c" stroke="#74400c" stroke-width=".8"/><path d="M18.600 4.600l-6.400 7.800" stroke="#e09c60" stroke-width="1.100"/><path d="M10.100 12.900l2.600 2.200-2.500 3.700-2.700-2.200z" fill="#c4c8cc" stroke="#6c6c6c" stroke-width=".7"/><path d="M7.300 16.400l3.200 2.600c-.5 3.300-3.800 4.300-8.800 4.300 2.700-1.300 3.800-3.300 5.600-6.900z" fill="#0c0c0c"/></svg><svg style="left:1854px;top:22px" width="24" height="24" viewBox="0 0 24 24"><defs><linearGradient id="gt"><stop offset="0" stop-color="#585858"/><stop offset="1" stop-color="#f4f4f4"/></linearGradient></defs><rect x="3.500" y="4.500" width="17.500" height="17" fill="url(#gt)" stroke="#5c5c5c" stroke-width="1.100"/><rect x="4.500" y="5.500" width="15.500" height="15" fill="none" stroke="#fff" stroke-width=".7" opacity=".5"/></svg><svg style="left:1903px;top:28px" width="11" height="11" viewBox="0 0 11 11"><rect x=".5" y=".5" width="10" height="10" rx="2" fill="#f2f2f2" stroke="#666"/><path d="M7.500 2.800v5.400l-4.500-2.700z" fill="#555"/></svg>
<div style="left:1678px;top:48px;width:241px;height:680px;background:#fff;border:1px solid #8a8a8a;border-left:none"></div><span style="left:1679px;top:55px;color:#2a2a2a">Sperre:</span><svg style="left:1722px;top:52px" width="16" height="18" viewBox="0 0 16 18"><path d="M1 3c4-3 8-2.500 9.500 1" fill="none" stroke="#c8c8c0" stroke-width="1"/><path d="M9 3.500c-3 3-3.800 6-2.600 9h5.200c1.200-3 .4-6-2.600-9z" fill="#f6e64a" stroke="#a89010" stroke-width=".9"/><path d="M9 5v5.500" stroke="#333" stroke-width=".8"/><circle cx="9" cy="10.500" r=".9" fill="#333"/><rect x="6.800" y="13" width="4.400" height="3" fill="#3a6cb8" stroke="#204a87" stroke-width=".7"/></svg><div style="left:1679px;top:74px;width:238px;height:632px;background:#f5f5f5;border:1px solid #9a9a9a"></div><div style="left:1682px;top:76px;width:233px;height:28px;background:#9b9b9b"></div><svg style="left:1690px;top:85px" width="14" height="11" viewBox="0 0 18 14"><path d="M1 7c3-4.500 7-6 10-5 3 .8 5 3 6 5-2 3-5 5-8.500 5s-6-2-7.500-5z" fill="#fff" stroke="#7a8ea8" stroke-width=".8"/><circle cx="8.500" cy="6.500" r="3.600" fill="#2c4c9c"/><circle cx="8.500" cy="6.500" r="1.700" fill="#0c1c4c"/><circle cx="7" cy="5" r="1.300" fill="#fff"/></svg><div style="left:1744px;top:78px;width:34px;height:24px;background:#fff;border:1px solid #111"></div><svg style="left:1745px;top:96px" width="8" height="5"><path d="M.5 5L3.5 1.5L7 5" stroke="#888" fill="#f4f4f4"/></svg><span style="left:1781px;top:84px;color:#fff">Unbenannt #1</span><div class="red" style="left:1675px;top:18px;width:34px;height:32px"></div><div class="red" style="left:1735px;top:18px;width:32px;height:32px"></div><div class="red" style="left:1681px;top:74px;width:31px;height:31px"></div>
<div style="left:1800px;top:709px;width:26px;height:17px;border:1px solid #6e6e6e;border-radius:3px;background:linear-gradient(90deg,#d0d0d0,#f4f4f4 50%,#d8d8d8)"></div><div style="left:1807px;top:712px;width:11px;height:11px;background:#f6303a"></div><svg style="left:1684px;top:709px" width="16" height="16" viewBox="0 0 16 16"><path d="M3.500 1.500h6.500l3.500 3.500v9.500h-10z" fill="#fcfcfc" stroke="#b8b8b8"/><path d="M10 1.500v3.500h3.500" fill="#eee" stroke="#b8b8b8"/></svg><svg style="left:1714px;top:709px" width="16" height="16" viewBox="0 0 16 16"><path d="M8.500 4l2 3.500h-1.500l1 3.500-2.500-3h1.200z" fill="#555"/></svg><svg style="left:1744px;top:709px" width="16" height="16" viewBox="0 0 16 16"><path d="M8 5l2.500 3h-1.200l1 3-2.800-3.200h1.500z" fill="#666"/></svg><svg style="left:1774px;top:709px" width="16" height="16" viewBox="0 0 16 16"><rect x="5.500" y="6.500" width="9.500" height="8" fill="#c4c8cc" stroke="#8a8e94"/><rect x="7" y="8" width="6.500" height="5" fill="#98a0ac"/><rect x="1.500" y="2.500" width="10" height="8.500" fill="#d4d8dc" stroke="#70747c"/><rect x="3" y="4" width="7" height="5.500" fill="#464e5e"/><path d="M3.500 5.500h6" stroke="#6c7484" stroke-width=".8"/></svg><svg style="left:1834px;top:709px" width="16" height="16" viewBox="0 0 16 16"><circle cx="8.500" cy="8.700" r="4.600" fill="#ec4c50"/><circle cx="7.500" cy="7.500" r="2" fill="#f47c7c" opacity=".7"/><g fill="#111"><rect x="1.800" y="2.300" width="2.200" height="2.200"/><rect x="13" y="2.300" width="2.200" height="2.200"/><rect x="1.800" y="13" width="2.200" height="2.200"/><rect x="13" y="13" width="2.200" height="2.200"/><rect x="7.500" y="2" width="2" height="1.600"/><rect x="7.500" y="13.800" width="2" height="1.600"/></g></svg><svg style="left:1865px;top:709px" width="16" height="16" viewBox="0 0 16 16"><circle cx="6.200" cy="9.600" r="4.400" fill="#f4f8fc" stroke="#3c64ac" stroke-width="1.300"/><path d="M6.500 7.500c-1.500 0-2.300 1-2.300 2.200 0 1.300 1 2.200 2.300 2.200" fill="none" stroke="#2c5cac" stroke-width="1.300"/><path d="M6.200 6.300l2 1.300-2 1.300z" fill="#2c5cac"/><path d="M13.900 3c.8.500.6 1.300.1 2.200l-3.500 6-1.700-1.100 3.500-6c.5-.9 1-1.400 1.600-1.100z" fill="#b47c4c" stroke="#6a4820" stroke-width=".6"/><path d="M12.500 4.500l1.200.8" stroke="#ddd" stroke-width=".8"/><path d="M8.700 10.200l1.800 1.100c-.6 2-2.400 3.400-5 4.200 1.500-1.500 2.300-3.100 3.200-5.300z" fill="#111"/></svg><svg style="left:1895px;top:709px" width="16" height="16" viewBox="0 0 16 16"><path d="M2.800 4.500c0 2 .8 3 .8 5.500s-.5 3-.3 4c.3 1.200 2.200 1.700 4.700 1.700s4.400-.5 4.700-1.700c.2-1-.3-1.500-.3-4s.8-3.500.8-5.500z" fill="#7c7c7c" stroke="#4c4c4c" stroke-width=".8"/><path d="M5 7v7.500M8 7.500v8M11 7v7.500" stroke="#5c5c5c" stroke-width=".8"/><path d="M4 7c.3 2 .3 5 0 7" stroke="#a8a8a8" stroke-width=".9" fill="none"/><ellipse cx="8" cy="4.200" rx="5.600" ry="2.500" fill="#a4a4a4" stroke="#4c4c4c" stroke-width=".9"/><ellipse cx="8" cy="4.300" rx="3.600" ry="1.300" fill="#3c3c3c"/></svg><div class="red" style="left:1793px;top:703px;width:38px;height:27px"></div>
<div style="left:1679px;top:737px;width:27px;height:10px;background:#f0f0f0;border:1px solid #d6d6d6"></div><div style="left:1682px;top:740px;width:21px;height:8px;background:#fff;border:1px solid #000"></div><div style="left:1706px;top:737px;width:27px;height:10px;background:#f0f0f0;border:1px solid #d6d6d6"></div><div style="left:1709px;top:740px;width:22px;height:8px;background:#f2b048;border:1px solid #000"></div><div style="left:1733px;top:735px;width:28px;height:12px;background:#fff;border:1px solid #d6d6d6"></div><div style="left:1737px;top:739px;width:22px;height:8px;background:linear-gradient(90deg,#000,#fff);border:1px solid #000"></div>
<div style="left:1678px;top:760px;width:241px;height:255px;background:#fff;border-right:1px solid #8a8a8a"></div><div style="left:1679px;top:770px;width:238px;height:200px;background:#f6f6f6;border:1px solid #9a9a9a"></div><div style="left:1684px;top:815.5px;width:34px;height:19px;border:1px solid #000;background:linear-gradient(90deg,#f7a81b,#e0407a 25%,#9020c8 50%,#3a5c9c 75%,#1f8a62)"></div><span style="left:1721.8px;top:819.3px;color:#000">Color</span><div style="left:1684px;top:838.3px;width:34px;height:19px;border:1px solid #000;background:linear-gradient(90deg,#00a0c8,#00d0e8 45%,#00e8f4 55%,#e0ffff 80%,#fff)"></div><span style="left:1721.8px;top:842.1px;color:#000">Eis</span><div style="left:1684px;top:861.3px;width:34px;height:19px;border:1px solid #000;background:linear-gradient(90deg,#00a8cc,#00d4ea 50%,#00ecf6 62%,#c8ffff 85%,#fff)"></div><span style="left:1721.8px;top:865.1px;color:#000">Ice</span><div style="left:1684px;top:884.3px;width:34px;height:19px;border:1px solid #000;background:linear-gradient(90deg,#000,#fff 50%,#000)"></div><span style="left:1721.8px;top:888.1px;color:#000">Unbenannt</span><div style="left:1684px;top:907.3px;width:34px;height:19px;border:1px solid #000;background:linear-gradient(90deg,#3c3cf4,#4a48f8 45%,#3060d0 58%,#28a090 66%,#c040e0 78%,#ff50b0 88%,#ffc040)"></div><span style="left:1721.8px;top:911.1px;color:#000">Abstract 1</span><div style="left:1684px;top:930.3px;width:34px;height:19px;border:1px solid #000;background:linear-gradient(90deg,#ff0020,#f02878 30%,#f060e0 55%,#3048a8 66%,#30d060 78%,#e0f0a0 86%,#c070d0 93%,#7028b0)"></div><span style="left:1721.8px;top:934.1px;color:#000">Abstract 2</span>
<div style="left:1899px;top:826px;width:14px;height:124px;background:#ececec"></div><div class="sbt" style="left:1900px;top:826px;width:12px;height:33px"></div><svg style="left:1899px;top:826px" width="14" height="124"><path d="M7 119l4-4.5h-8z" fill="#333"/><path d="M4 3.5h6M4 6.5h6M4 9.5h6" stroke="#c8c8c8"/></svg><div style="left:1682px;top:951px;width:215px;height:17px;background:#ececec"></div><div class="sbt" style="left:1699px;top:953px;width:131px;height:13px"></div><svg style="left:1682px;top:951px" width="215" height="17"><path d="M5 8.5l4.5-4v8z" fill="#333"/><path d="M210 8.5l-4.5-4v8z" fill="#333"/><path d="M80.5 6v5M83.500 6v5M86.500 6v5" stroke="#c0c0c0"/></svg>
<div style="left:1680px;top:974px;width:237px;height:20px;border:1px solid #d8d8d8;border-radius:2px;background:#fff"></div><span style="left:1685px;top:977px;color:#9a9a9a;font-style:italic">Tags eingeben</span><div class="arr" style="left:1902px;top:982px"></div><svg style="left:1694px;top:998px" width="16" height="16" viewBox="0 0 16 16"><path d="M2.500 2.500h10v12h-10z" fill="#fcfcfc" stroke="#a0a0a0"/><path d="M4.500 13l1-3.500 7-7.500 2.500 2.500-7 7.500z" fill="#f0a030" stroke="#a86010" stroke-width=".7"/><path d="M12.500 2l1-1 2.500 2.500-1 1z" fill="#e84040"/><path d="M4.500 13l.5-1.500 1 1z" fill="#222"/></svg><svg style="left:1742px;top:998px" width="16" height="16" viewBox="0 0 16 16"><path d="M3.500 1.500h6.500l3.500 3.500v9.500h-10z" fill="#fcfcfc" stroke="#b8b8b8"/><path d="M10 1.500v3.500h3.500" fill="#eee" stroke="#b8b8b8"/></svg><svg style="left:1790px;top:998px" width="16" height="16" viewBox="0 0 16 16"><rect x="5.500" y="6.500" width="9.500" height="8" fill="#c4c8cc" stroke="#8a8e94"/><rect x="7" y="8" width="6.500" height="5" fill="#98a0ac"/><rect x="1.500" y="2.500" width="10" height="8.500" fill="#d4d8dc" stroke="#70747c"/><rect x="3" y="4" width="7" height="5.500" fill="#464e5e"/><path d="M3.500 5.500h6" stroke="#6c7484" stroke-width=".8"/></svg><svg style="left:1837px;top:998px" width="16" height="16" viewBox="0 0 16 16"><path d="M3 4.500h10l-1 10c0 .8-1.500 1.200-4 1.200s-4-.4-4-1.200z" fill="#b8b8b8" stroke="#777" stroke-width=".8" stroke-dasharray="1 1"/><ellipse cx="8" cy="4" rx="5.500" ry="2.300" fill="#c4c4c4" stroke="#777" stroke-width=".9" stroke-dasharray="1 1"/><path d="M5.500 7v7M8 7.500v7.500M10.500 7v7M4 9h8M4 12h8" stroke="#6c6c6c" stroke-width=".6"/></svg><svg style="left:1886px;top:998px" width="16" height="16" viewBox="0 0 16 16"><path d="M3 7c.5-3 4-4.500 7-3" fill="none" stroke="#444" stroke-width="1.500"/><path d="M9 1l4 3.500-4.500 2z" fill="#444"/><path d="M13 9c-.5 3-4 4.500-7 3" fill="none" stroke="#444" stroke-width="1.500"/><path d="M7 15l-4-3.500 4.500-2z" fill="#444"/></svg>
<div style="left:1621px;top:742px;width:299px;height:83px;background:linear-gradient(#e9e9e9,#e2e2e2);border:1px solid #000;box-shadow:2px 2px 3px rgba(0,0,0,.45)"></div><span style="left:1624px;top:746.5px;font-size:12px;color:#2a2a2a;letter-spacing:.33px">Auswahl aus Pfad</span><span style="left:1624px;top:762.5px;font-size:12px;color:#2a2a2a;letter-spacing:.12px"><b class="b">Umschalt</b></span><span style="left:1690.5px;top:762.5px;font-size:12px;color:#2a2a2a;letter-spacing:.4px">Den Pfad der Auswahl hinzufügen</span><span style="left:1624px;top:778.5px;font-size:12px;color:#2a2a2a;letter-spacing:.3px"><b class="b">Strg</b></span><span style="left:1660px;top:778.5px;font-size:12px;color:#2a2a2a;letter-spacing:.37px">Den Pfas von der Auswahl abziehen</span><span style="left:1624px;top:794.5px;font-size:12px;color:#2a2a2a;letter-spacing:.33px"><b class="b">Umschalt+Strg</b></span><span style="left:1729px;top:794.5px;font-size:12px;color:#2a2a2a;letter-spacing:.36px">Die Schnittmenge des Pfades mit</span><span style="left:1624px;top:810.5px;font-size:12px;color:#2a2a2a;letter-spacing:.45px">der Auswahl bilden</span>
</body></html>
